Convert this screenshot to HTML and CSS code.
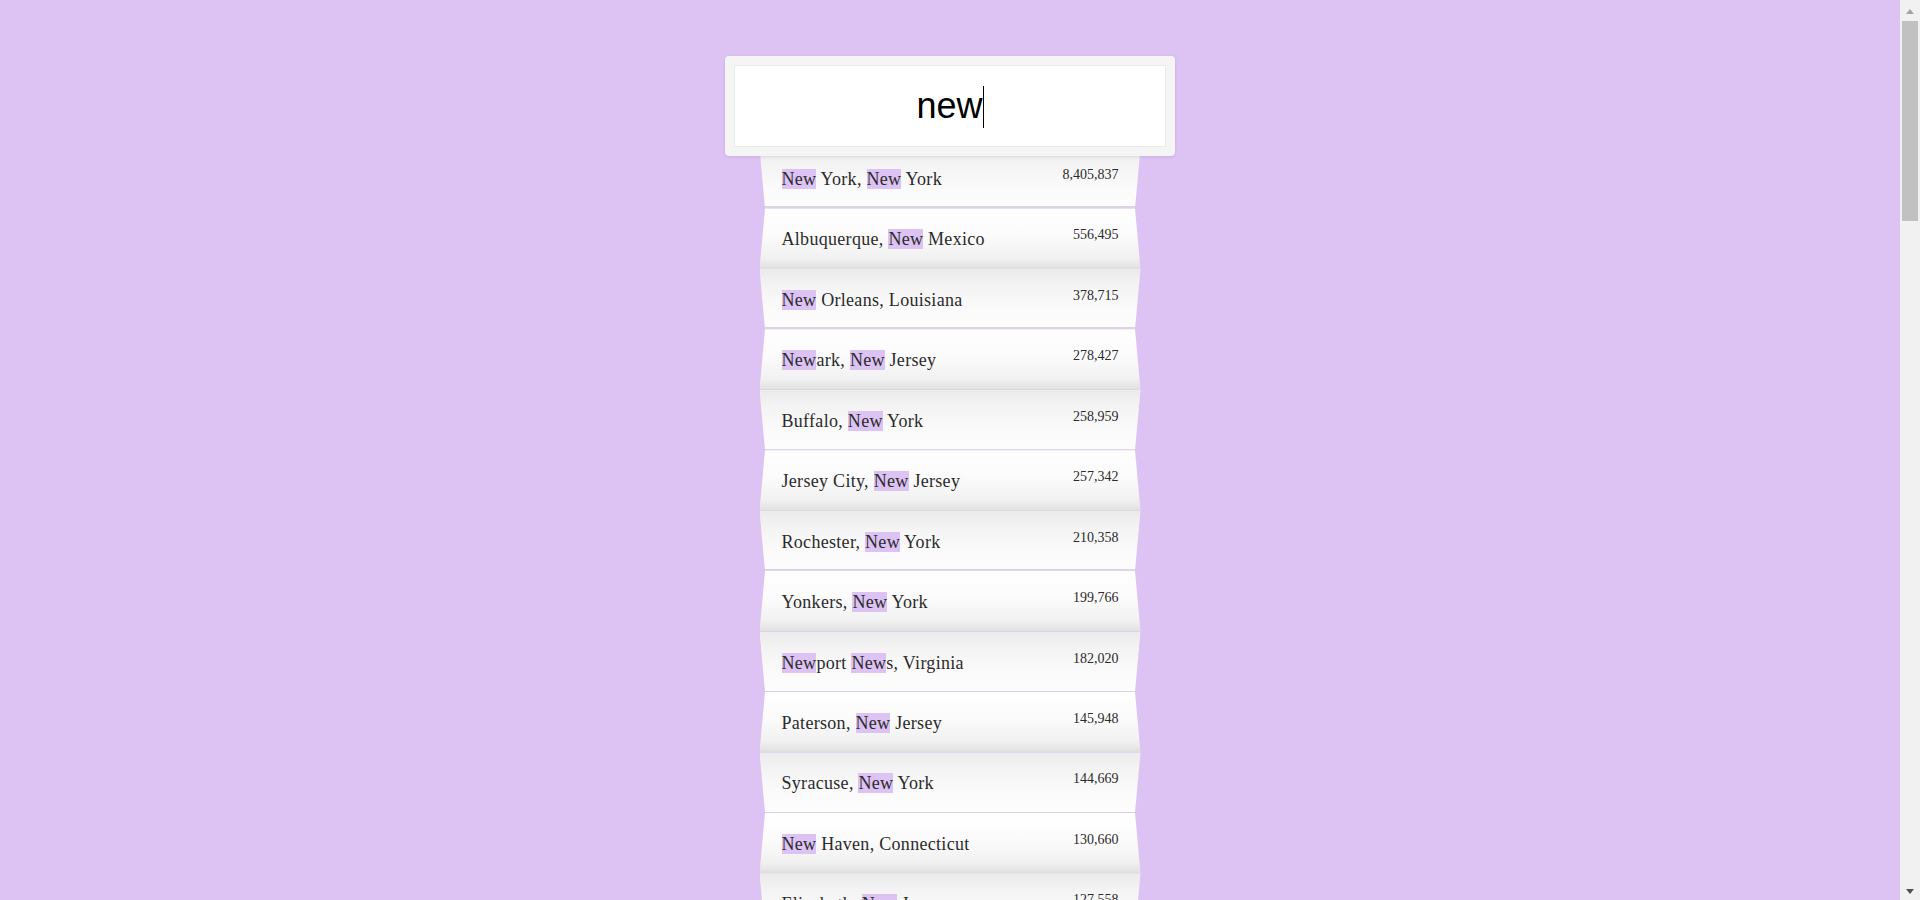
FILE: index.html
```html
<!DOCTYPE html>
<html lang="en">
<head>
<meta charset="utf-8">
<title>City search</title>
<link rel="stylesheet" href="styles.css">
</head>
<body>
<main class="page">
  <div class="search">
    <div class="search-input"><span class="query">new</span><span class="caret"></span></div>
  </div>
  <ul class="results">
    <li class="item"><span class="name"><mark>New</mark> York, <mark>New</mark> York</span><span class="pop">8,405,837</span></li>
    <li class="item"><span class="name">Albuquerque, <mark>New</mark> Mexico</span><span class="pop">556,495</span></li>
    <li class="item"><span class="name"><mark>New</mark> Orleans, Louisiana</span><span class="pop">378,715</span></li>
    <li class="item"><span class="name"><mark>New</mark>ark, <mark>New</mark> Jersey</span><span class="pop">278,427</span></li>
    <li class="item"><span class="name">Buffalo, <mark>New</mark> York</span><span class="pop">258,959</span></li>
    <li class="item"><span class="name">Jersey City, <mark>New</mark> Jersey</span><span class="pop">257,342</span></li>
    <li class="item"><span class="name">Rochester, <mark>New</mark> York</span><span class="pop">210,358</span></li>
    <li class="item"><span class="name">Yonkers, <mark>New</mark> York</span><span class="pop">199,766</span></li>
    <li class="item"><span class="name"><mark>New</mark>port <mark>New</mark>s, Virginia</span><span class="pop">182,020</span></li>
    <li class="item"><span class="name">Paterson, <mark>New</mark> Jersey</span><span class="pop">145,948</span></li>
    <li class="item"><span class="name">Syracuse, <mark>New</mark> York</span><span class="pop">144,669</span></li>
    <li class="item"><span class="name"><mark>New</mark> Haven, Connecticut</span><span class="pop">130,660</span></li>
    <li class="item"><span class="name">Elizabeth, <mark>New</mark> Jersey</span><span class="pop">127,558</span></li>
    <li class="item"><span class="name">Manchester, <mark>New</mark> Hampshire</span><span class="pop">110,378</span></li>
    <li class="item"><span class="name">Las Cruces, <mark>New</mark> Mexico</span><span class="pop">101,324</span></li>
    <li class="item"><span class="name">Albany, <mark>New</mark> York</span><span class="pop">98,424</span></li>
    <li class="item"><span class="name"><mark>New</mark> Bedford, Massachusetts</span><span class="pop">95,078</span></li>
    <li class="item"><span class="name">Rio Rancho, <mark>New</mark> Mexico</span><span class="pop">91,956</span></li>
    <li class="item"><span class="name"><mark>New</mark>ton, Massachusetts</span><span class="pop">87,971</span></li>
    <li class="item"><span class="name"><mark>New</mark>port Beach, California</span><span class="pop">87,273</span></li>
    <li class="item"><span class="name">Nashua, <mark>New</mark> Hampshire</span><span class="pop">87,137</span></li>
    <li class="item"><span class="name">Clifton, <mark>New</mark> Jersey</span><span class="pop">84,722</span></li>
    <li class="item"><span class="name">Trenton, <mark>New</mark> Jersey</span><span class="pop">84,349</span></li>
    <li class="item"><span class="name"><mark>New</mark> Rochelle, <mark>New</mark> York</span><span class="pop">79,446</span></li>
    <li class="item"><span class="name">Camden, <mark>New</mark> Jersey</span><span class="pop">77,250</span></li>
    <li class="item"><span class="name"><mark>New</mark> Britain, Connecticut</span><span class="pop">72,939</span></li>
    <li class="item"><span class="name">Passaic, <mark>New</mark> Jersey</span><span class="pop">70,868</span></li>
    <li class="item"><span class="name">Santa Fe, <mark>New</mark> Mexico</span><span class="pop">69,976</span></li>
    <li class="item"><span class="name">Union City, <mark>New</mark> Jersey</span><span class="pop">68,247</span></li>
    <li class="item"><span class="name">Mount Vernon, <mark>New</mark> York</span><span class="pop">67,896</span></li>
    <li class="item"><span class="name">Schenectady, <mark>New</mark> York</span><span class="pop">65,902</span></li>
    <li class="item"><span class="name">Bayonne, <mark>New</mark> Jersey</span><span class="pop">65,028</span></li>
    <li class="item"><span class="name">East Orange, <mark>New</mark> Jersey</span><span class="pop">64,789</span></li>
    <li class="item"><span class="name"><mark>New</mark> Braunfels, Texas</span><span class="pop">63,279</span></li>
    <li class="item"><span class="name">Utica, <mark>New</mark> York</span><span class="pop">61,808</span></li>
    <li class="item"><span class="name">Vineland, <mark>New</mark> Jersey</span><span class="pop">61,050</span></li>
    <li class="item"><span class="name"><mark>New</mark> Brunswick, <mark>New</mark> Jersey</span><span class="pop">55,831</span></li>
    <li class="item"><span class="name">West <mark>New</mark> York, <mark>New</mark> Jersey</span><span class="pop">53,343</span></li>
    <li class="item"><span class="name">Hoboken, <mark>New</mark> Jersey</span><span class="pop">52,575</span></li>
    <li class="item"><span class="name">Perth Amboy, <mark>New</mark> Jersey</span><span class="pop">51,982</span></li>
    <li class="item"><span class="name">Plainfield, <mark>New</mark> Jersey</span><span class="pop">50,588</span></li>
    <li class="item"><span class="name">Troy, <mark>New</mark> York</span><span class="pop">49,974</span></li>
    <li class="item"><span class="name">Niagara Falls, <mark>New</mark> York</span><span class="pop">49,468</span></li>
    <li class="item"><span class="name">Roswell, <mark>New</mark> Mexico</span><span class="pop">48,611</span></li>
    <li class="item"><span class="name"><mark>New</mark>ark, Ohio</span><span class="pop">47,673</span></li>
    <li class="item"><span class="name">Binghamton, <mark>New</mark> York</span><span class="pop">46,444</span></li>
    <li class="item"><span class="name">Farmington, <mark>New</mark> Mexico</span><span class="pop">45,426</span></li>
    <li class="item"><span class="name">Hackensack, <mark>New</mark> Jersey</span><span class="pop">44,756</span></li>
    <li class="item"><span class="name">Sayreville, <mark>New</mark> Jersey</span><span class="pop">44,412</span></li>
    <li class="item"><span class="name"><mark>New</mark>ark, California</span><span class="pop">44,096</span></li>
    <li class="item"><span class="name">Freeport, <mark>New</mark> York</span><span class="pop">43,167</span></li>
    <li class="item"><span class="name">Concord, <mark>New</mark> Hampshire</span><span class="pop">42,620</span></li>
    <li class="item"><span class="name">Kearny, <mark>New</mark> Jersey</span><span class="pop">41,664</span></li>
    <li class="item"><span class="name">Linden, <mark>New</mark> Jersey</span><span class="pop">41,301</span></li>
    <li class="item"><span class="name"><mark>New</mark> Berlin, Wisconsin</span><span class="pop">39,834</span></li>
    <li class="item"><span class="name">Atlantic City, <mark>New</mark> Jersey</span><span class="pop">39,551</span></li>
    <li class="item"><span class="name">Fort Lee, <mark>New</mark> Jersey</span><span class="pop">37,907</span></li>
    <li class="item"><span class="name">Valley Stream, <mark>New</mark> York</span><span class="pop">37,659</span></li>
    <li class="item"><span class="name"><mark>New</mark> Albany, Indiana</span><span class="pop">36,372</span></li>
    <li class="item"><span class="name"><mark>New</mark>nan, Georgia</span><span class="pop">36,242</span></li>
    <li class="item"><span class="name">Long Beach, <mark>New</mark> York</span><span class="pop">33,667</span></li>
    <li class="item"><span class="name">Fair Lawn, <mark>New</mark> Jersey</span><span class="pop">32,967</span></li>
  </ul>
</main>
<div class="scrollbar" aria-hidden="true">
  <div class="sb-button"><span class="sb-arrow sb-arrow-up"></span></div>
  <div class="sb-track"><div class="sb-thumb"></div></div>
  <div class="sb-button"><span class="sb-arrow sb-arrow-down"></span></div>
</div>
</body>
</html>
```
FILE: styles.css
```css
html, body {
  margin: 0;
  padding: 0;
}

body {
  background: #ddc2f4;
  font-family: "Liberation Serif", "Times New Roman", serif;
  color: #2b2b2b;
  padding-right: 20px;
}

.page {
  display: flex;
  flex-direction: column;
  align-items: center;
  padding-top: 56px;
}

.search {
  position: relative;
  z-index: 2;
  box-sizing: border-box;
  width: 450px;
  height: 100px;
  padding: 9px;
  background: #f5f5f5;
  border-radius: 4px;
  box-shadow: 0 1px 3px rgba(80, 40, 110, 0.12);
}

.search-input {
  box-sizing: border-box;
  height: 82px;
  background: #fff;
  border: 1px solid #ebebeb;
  display: flex;
  align-items: center;
  justify-content: center;
  font-family: "Liberation Sans", Arial, sans-serif;
  font-size: 36px;
  color: #000;
}

.query {
  line-height: normal;
}

.caret {
  width: 1px;
  height: 42px;
  background: #000;
  margin-top: 1px;
}

.results {
  list-style: none;
  margin: -8px 0 0;
  padding: 0;
  width: 381px;
}

.item {
  box-sizing: border-box;
  height: 60.45px;
  padding: 21px 22px 0;
  display: flex;
  justify-content: space-between;
  align-items: flex-start;
  background: linear-gradient(to bottom, #ebebeb 0%, #f4f4f4 30%, #fbfbfb 70%, #fdfdfd calc(100% - 1.5px), #dcd3e6 calc(100% - 1.5px));
  clip-path: polygon(0 0, 100% 0, calc(100% - 5.5px) 100%, 5.5px 100%);
}

.item:nth-child(even) {
  background: linear-gradient(to bottom, #ffffff 0%, #fbfbfb 45%, #f1f1f1 82%, #e6e6e6 94%, #dedede 100%);
  clip-path: polygon(5.5px 0, calc(100% - 5.5px) 0, 100% 100%, 0 100%);
}

.name {
  font-size: 18px;
  line-height: normal;
  letter-spacing: 0.3px;
  white-space: nowrap;
}

.name mark {
  background: #ddc2f4;
  color: inherit;
}

.pop {
  font-size: 14px;
  line-height: normal;
  margin-top: -2px;
}

/* classic browser scrollbar drawn over the right edge of the viewport */
.scrollbar {
  position: fixed;
  top: 0;
  right: 0;
  width: 20px;
  height: 100vh;
  background: #f1f1f1;
  display: flex;
  flex-direction: column;
  z-index: 5;
}

.sb-button {
  height: 20px;
  display: flex;
  align-items: center;
  justify-content: center;
  flex: none;
}

.sb-track {
  flex: 1;
  padding: 1px 2px 0;
}

.sb-thumb {
  height: 200px;
  background: #c1c1c1;
}

.sb-arrow {
  width: 0;
  height: 0;
  border-left: 4.5px solid transparent;
  border-right: 4.5px solid transparent;
}

.sb-arrow-up {
  border-bottom: 5px solid #a3a3a3;
  margin-top: 2px;
}

.sb-arrow-down {
  border-top: 5px solid #505050;
  margin-top: 2px;
}
```
